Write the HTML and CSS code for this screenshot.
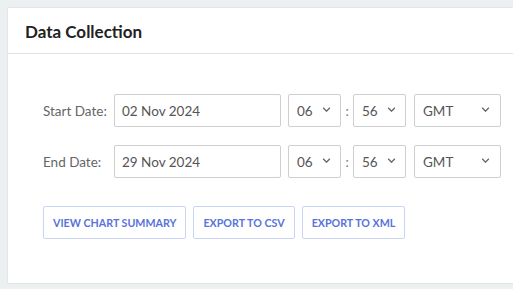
FILE: index.html
```html
<!DOCTYPE html>
<html>
<head>
<meta charset="utf-8">
<link rel="stylesheet" href="styles.css">
</head>
<body>
<div class="card">
  <div class="card-header"><h2 class="title">Data Collection</h2></div>
  <div class="card-body">
    <div class="row">
      <label class="label">Start Date:</label>
      <div class="input date">02 Nov 2024</div>
      <div class="select time"><span>06</span><svg class="chev" viewBox="0 0 10 6"><path d="M1 1l4 4 4-4"/></svg></div>
      <span class="colon">:</span>
      <div class="select time"><span>56</span><svg class="chev" viewBox="0 0 10 6"><path d="M1 1l4 4 4-4"/></svg></div>
      <div class="select tz"><span>GMT</span><svg class="chev" viewBox="0 0 10 6"><path d="M1 1l4 4 4-4"/></svg></div>
    </div>
    <div class="row">
      <label class="label">End Date:</label>
      <div class="input date">29 Nov 2024</div>
      <div class="select time"><span>06</span><svg class="chev" viewBox="0 0 10 6"><path d="M1 1l4 4 4-4"/></svg></div>
      <span class="colon">:</span>
      <div class="select time"><span>56</span><svg class="chev" viewBox="0 0 10 6"><path d="M1 1l4 4 4-4"/></svg></div>
      <div class="select tz"><span>GMT</span><svg class="chev" viewBox="0 0 10 6"><path d="M1 1l4 4 4-4"/></svg></div>
    </div>
    <div class="actions">
      <button class="btn">View Chart Summary</button>
      <button class="btn">Export to CSV</button>
      <button class="btn">Export to XML</button>
    </div>
  </div>
</div>
</body>
</html>
```
FILE: styles.css
```css
html, body {
  margin: 0;
  padding: 0;
}
body {
  background: #edf0f1;
  padding: 7px 0 0 7px;
  overflow: hidden;
  font-family: "Lato", "Open Sans", sans-serif;
  color: #555;
}
.card {
  width: 506px;
  height: 277px;
  background: #fff;
  border: 1px solid #e3e6e8;
  border-right: none;
  box-sizing: border-box;
  border-radius: 2px 0 0 2px;
}
.card-header {
  height: 46px;
  border-bottom: 1px solid #e2e2e2;
  box-sizing: border-box;
  display: flex;
  align-items: center;
  padding-left: 17px;
}
.title {
  margin: 0;
  font-size: 17px;
  font-weight: 700;
  color: #222;
  padding-top: 1px;
}
.card-body {
  padding: 40px 0 0 35px;
  display: flex;
  flex-direction: column;
  gap: 18px;
}
.row {
  display: flex;
  align-items: center;
  height: 33px;
}
.label {
  width: 71px;
  font-size: 13.5px;
  color: #666;
}
.input, .select {
  height: 33px;
  box-sizing: border-box;
  border: 1px solid #cfcfcf;
  border-radius: 2px;
  display: flex;
  align-items: center;
  font-size: 13.5px;
  color: #555;
}
.date {
  width: 167px;
  padding-left: 7px;
}
.select {
  justify-content: space-between;
  padding: 0 9px 0 8px;
}
.time {
  width: 53px;
  margin-left: 7px;
}
.colon {
  width: 12px;
  text-align: center;
  font-size: 13px;
  color: #777;
}
.time + .colon + .time {
  margin-left: 0;
}
.tz {
  width: 87px;
  margin-left: 8px;
  padding-right: 10px;
}
.chev {
  width: 9px;
  height: 5px;
  fill: none;
  stroke: #666;
  stroke-width: 1.6;
  margin-top: -3px;
}
.actions {
  display: flex;
  gap: 7px;
  margin-top: 10px;
}
.btn {
  height: 33px;
  border: 1px solid #c9d4f7;
  border-radius: 2px;
  background: #fff;
  color: #5873da;
  font-family: "Lato", "Open Sans", sans-serif;
  font-weight: 700;
  font-size: 10.7px;
  text-transform: uppercase;
  padding: 0 9px;
}
```
